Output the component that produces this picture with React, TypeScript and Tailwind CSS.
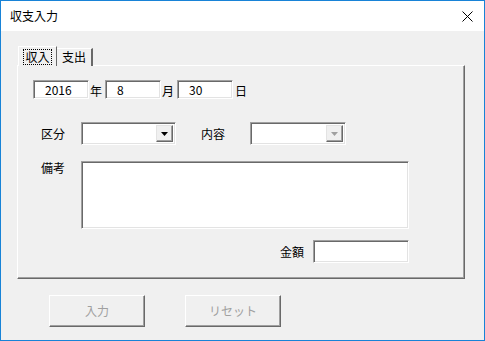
import React from "react";

const font = { fontFamily: '"Noto Sans CJK JP", "Noto Sans", sans-serif' };

function Sunken({ className = "", children }: { className?: string; children?: React.ReactNode }) {
  return (
    <div
      className={
        "bg-white border border-t-[#a0a0a0] border-l-[#a0a0a0] border-b-white border-r-white shadow-[inset_1px_1px_0_#696969,inset_-1px_-1px_0_#e3e3e3] " +
        className
      }
    >
      {children}
    </div>
  );
}

function Combo({ disabled = false, className = "" }: { disabled?: boolean; className?: string }) {
  return (
    <Sunken className={"flex justify-end p-[2px] " + className}>
      <div className="w-[17px] h-full bg-[#f0f0f0] border border-t-[#e3e3e3] border-l-[#e3e3e3] border-b-[#696969] border-r-[#696969] shadow-[inset_-1px_-1px_0_#a0a0a0] flex items-center justify-center">
        <svg width="7" height="4" viewBox="0 0 7 4">
          <path d="M0 0H7L3.5 4Z" fill={disabled ? "#a0a0a0" : "#000"} />
        </svg>
      </div>
    </Sunken>
  );
}

function Btn({ label }: { label: string }) {
  return (
    <div className="w-[96px] h-[32px] bg-[#f0f0f0] border border-t-white border-l-white border-b-[#696969] border-r-[#696969] shadow-[inset_-1px_-1px_0_#a0a0a0] flex items-center justify-center text-[12px] text-[#a0a0a0]">
      {label}
    </div>
  );
}

function DateBox({ value }: { value: string }) {
  return (
    <Sunken className="w-[56px] h-[19px] flex items-center pl-[11px] text-[12px] leading-none">{value}</Sunken>
  );
}

export default function App() {
  return (
    <div style={font} className="w-[485px] h-[341px] border border-[#1883d7] bg-[#f0f0f0] flex flex-col text-black">
      <div className="h-[30px] bg-white flex items-center justify-between pl-[9px] pr-[10px]">
        <span className="text-[12px]">収支入力</span>
        <svg width="11" height="11" viewBox="0 0 11 11" className="mr-[1px]">
          <path d="M0.5 0.5L10.5 10.5M10.5 0.5L0.5 10.5" stroke="#000" strokeWidth="1" />
        </svg>
      </div>

      <div className="flex flex-col pl-[16px] pt-[15px]">
        <div className="flex items-end h-[20px] ml-[1px] relative z-10 -mb-px">
          <div className="h-[20px] w-[39px] bg-[#f0f0f0] border-l border-t border-white border-r border-r-[#696969] flex items-start justify-center pt-[2px]">
            <span className="text-[12px] leading-[14px] border border-dotted border-black px-[1px]">収入</span>
          </div>
          <div className="h-[18px] w-[36px] bg-[#f0f0f0] border-t border-white border-r-2 border-r-[#696969] flex items-start justify-center pt-[1px]">
            <span className="text-[12px] leading-[14px]">支出</span>
          </div>
        </div>

        <div className="w-[448px] h-[214px] border-l border-t border-white border-r border-b border-r-[#696969] border-b-[#696969] shadow-[inset_-1px_-1px_0_#a0a0a0] flex flex-col text-[12px]">
          <div className="flex items-center pl-[15px] pt-[13px]">
            <DateBox value="2016" />
            <span className="w-[16px] pl-[1px] pt-[3px]">年</span>
            <DateBox value="8" />
            <span className="w-[16px] pl-[1px] pt-[3px]">月</span>
            <DateBox value="30" />
            <span className="pl-[2px] pt-[3px]">日</span>
          </div>

          <div className="flex items-center pl-[23px] mt-[22px]">
            <span className="w-[40px]">区分</span>
            <Combo className="w-[95px] h-[23px]" />
            <span className="w-[74px] pl-[25px]">内容</span>
            <Combo disabled className="w-[96px] h-[23px]" />
          </div>

          <div className="flex items-start pl-[23px] mt-[16px]">
            <span className="w-[40px] -mt-[2px]">備考</span>
            <Sunken className="w-[328px] h-[68px]" />
          </div>

          <div className="flex items-center justify-end w-[391px] mt-[11px]">
            <span className="mr-[9px] mt-[1px]">金額</span>
            <Sunken className="w-[96px] h-[23px]" />
          </div>
        </div>

        <div className="flex mt-[16px] pl-[32px] gap-[40px]">
          <Btn label="入力" />
          <Btn label="リセット" />
        </div>
      </div>
    </div>
  );
}
